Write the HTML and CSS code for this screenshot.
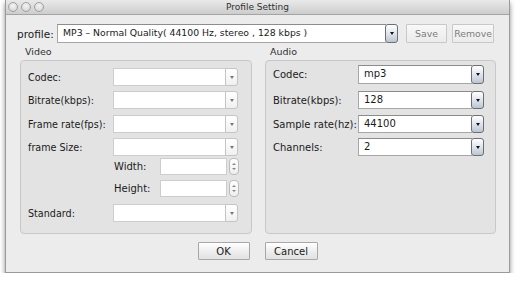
FILE: index.html
```html
<!DOCTYPE html>
<html lang="en">
<head>
    <meta charset="UTF-8">
    <title>Profile Setting</title>
    <link rel="stylesheet" href="styles.css">
</head>
<body>
    <div class="window">
        <div class="titlebar">
            <div class="lights"><span></span><span></span><span></span></div>
            <div class="title">Profile Setting</div>
            <div></div>
        </div>
        <div class="content">
            <div class="profile-row">
                <span class="profile-label">profile:</span>
                <div class="combo combo-on profile-combo">
                    <span class="field">MP3 – Normal Quality( 44100 Hz, stereo , 128 kbps )</span>
                    <span class="arrow"></span>
                </div>
                <button class="btn btn-off save">Save</button>
                <button class="btn btn-off remove">Remove</button>
            </div>

            <div class="groups">
                <div class="group video">
                    <div class="group-title">Video</div>
                    <div class="group-box">
                        <div class="row v1"><span class="lbl">Codec:</span><div class="combo combo-off"><span class="field"></span><span class="arrow"></span></div></div>
                        <div class="row v2"><span class="lbl">Bitrate(kbps):</span><div class="combo combo-off"><span class="field"></span><span class="arrow"></span></div></div>
                        <div class="row v3"><span class="lbl">Frame rate(fps):</span><div class="combo combo-off"><span class="field"></span><span class="arrow"></span></div></div>
                        <div class="row v4"><span class="lbl">frame Size:</span><div class="combo combo-off"><span class="field"></span><span class="arrow"></span></div></div>
                        <div class="row spin-row v5">
                            <span class="lbl"></span>
                            <span class="sub-lbl">Width:</span>
                            <div class="spinner"><span class="field"></span><span class="stepper"><i class="up"></i><i class="down"></i></span></div>
                        </div>
                        <div class="row spin-row v6">
                            <span class="lbl"></span>
                            <span class="sub-lbl">Height:</span>
                            <div class="spinner"><span class="field"></span><span class="stepper"><i class="up"></i><i class="down"></i></span></div>
                        </div>
                        <div class="row v7"><span class="lbl">Standard:</span><div class="combo combo-off"><span class="field"></span><span class="arrow"></span></div></div>
                    </div>
                </div>

                <div class="group audio">
                    <div class="group-title">Audio</div>
                    <div class="group-box">
                        <div class="row a1"><span class="lbl">Codec:</span><div class="combo combo-on"><span class="field">mp3</span><span class="arrow"></span></div></div>
                        <div class="row a2"><span class="lbl">Bitrate(kbps):</span><div class="combo combo-on"><span class="field">128</span><span class="arrow"></span></div></div>
                        <div class="row a3"><span class="lbl">Sample rate(hz):</span><div class="combo combo-on"><span class="field">44100</span><span class="arrow"></span></div></div>
                        <div class="row a4"><span class="lbl">Channels:</span><div class="combo combo-on"><span class="field">2</span><span class="arrow"></span></div></div>
                    </div>
                </div>
            </div>

            <div class="actions">
                <button class="btn ok">OK</button>
                <button class="btn cancel">Cancel</button>
            </div>
        </div>
    </div>
</body>
</html>
```

FILE: styles.css
```css
body {
    margin: 0;
    background: #ffffff;
    font-family: "DejaVu Sans", sans-serif;
    font-size: 10px;
    color: #1a1a1a;
}
.window {
    width: 505px;
    height: 273px;
    margin-left: 5px;
    box-sizing: border-box;
    border: 1px solid #9a9a9a;
    border-top: none;
    background: #ececec;
    box-shadow: 0 3px 5px rgba(0, 0, 0, 0.45);
}
.titlebar {
    height: 14px;
    border-bottom: 1px solid #a4a4a4;
    background: linear-gradient(#e9e9e9, #cdcdcd);
    display: grid;
    grid-template-columns: 1fr auto 1fr;
    align-items: center;
}
.lights {
    display: flex;
    gap: 3px;
    padding-left: 2px;
}
.lights span {
    width: 10px;
    height: 10px;
    box-sizing: border-box;
    border-radius: 50%;
    border: 1px solid #a0a0a0;
    background: radial-gradient(circle at 50% 35%, #f4f4f4, #cfcfcf);
}
.title {
    font-size: 9px;
    color: #303030;
}
.content {
    padding-top: 9px;
}
.profile-row {
    display: flex;
    align-items: center;
    height: 19px;
    padding-left: 11px;
}
.profile-label {
    width: 40px;
    flex-shrink: 0;
    font-size: 10.5px;
}
.profile-row .profile-combo {
    width: 341px;
    height: 19px;
    flex-shrink: 0;
}
.profile-combo .field {
    line-height: 17px;
    font-size: 9.3px;
}
.btn {
    font-family: "DejaVu Sans", sans-serif;
    font-size: 10px;
    height: 19px;
    padding: 0;
    box-sizing: border-box;
    border: 1px solid #a8a8a8;
    border-radius: 1px;
    background: linear-gradient(#ffffff, #ededed 55%, #e2e2e2);
    color: #1a1a1a;
    flex-shrink: 0;
}
.btn-off {
    border-color: #c8c8c8;
    background: linear-gradient(#f8f8f8, #ebebeb);
    color: #7c7c7c;
    font-size: 9.3px;
}
.save {
    width: 41px;
    margin-left: 8px;
}
.remove {
    width: 42px;
    margin-left: 5px;
}
.groups {
    display: flex;
    gap: 13px;
    padding-left: 14px;
    margin-top: 3px;
}
.group-title {
    height: 12px;
    line-height: 12px;
    margin: 0 0 2px 5px;
    color: #303030;
    font-size: 9.5px;
}
.group-box {
    height: 174px;
    box-sizing: border-box;
    border: 1px solid #c8c8c8;
    border-radius: 4px;
    background: #e3e3e3;
    padding-left: 7px;
}
.video .group-box {
    width: 232px;
}
.audio .group-box {
    width: 231px;
}
.row {
    display: flex;
    align-items: center;
    height: 18px;
    margin-top: 5px;
}
.lbl {
    width: 85px;
    flex-shrink: 0;
    white-space: nowrap;
}
.combo {
    display: flex;
    height: 18px;
    width: 125px;
    box-sizing: border-box;
}
.audio .combo {
    width: 126px;
}
.combo .field {
    flex: 1;
    background: #ffffff;
    line-height: 16px;
    padding-left: 5px;
    white-space: nowrap;
    overflow: hidden;
}
.combo .arrow {
    display: flex;
    align-items: center;
    justify-content: center;
    width: 13px;
    box-sizing: border-box;
    border-radius: 0 3px 3px 0;
}
.combo .arrow::after {
    content: "";
    border-left: 2.5px solid transparent;
    border-right: 2.5px solid transparent;
    border-top: 3px solid #444;
}
.combo-off .field {
    border: 1px solid #cdcdcd;
    border-right: none;
}
.combo-off .arrow {
    border: 1px solid #c4c4c4;
    background: linear-gradient(#ffffff, #f0f0f0);
}
.combo-off .arrow::after {
    border-top-color: #777;
}
.combo-on .field {
    border: 1px solid #a6a6a6;
    border-top-color: #8c8c8c;
    border-right: none;
}
.combo-on .arrow {
    border: 1px solid #6e6e6e;
    border-radius: 3px;
    background: linear-gradient(#ffffff, #dfe5ee 50%, #bcc5d3);
    margin-left: -1px;
}
.combo-on .arrow::after {
    border-top-color: #111;
}
.v1 { margin-top: 7px; }
.v3 { margin-top: 6px; }
.v4 { margin-top: 5px; }
.v5 { margin-top: 2px; }
.v6 { margin-top: 5px; }
.v7 { margin-top: 7px; }
.a1 { margin-top: 4px; height: 19px; }
.a1 .combo { height: 19px; }
.a2 { margin-top: 7px; }
.a3 { margin-top: 6px; }
.video .lbl {
    font-size: 9.6px;
}
.spin-row {
    height: 17px;
}
.spin-row .lbl {
    width: 86px;
}
.sub-lbl {
    width: 46px;
}
.spinner {
    display: flex;
    width: 79px;
    height: 17px;
}
.spinner .field {
    flex: 1;
    background: #ffffff;
    border: 1px solid #cdcdcd;
}
.stepper {
    width: 10px;
    margin-left: 2px;
    box-sizing: border-box;
    border: 1px solid #bcbcbc;
    border-radius: 4px;
    background: linear-gradient(#ffffff, #eeeeee);
    display: flex;
    flex-direction: column;
    align-items: center;
    justify-content: space-evenly;
}
.stepper i {
    display: block;
    border-left: 2px solid transparent;
    border-right: 2px solid transparent;
}
.stepper .up {
    border-bottom: 2.5px solid #888;
}
.stepper .down {
    border-top: 2.5px solid #888;
}
.actions {
    display: flex;
    justify-content: center;
    gap: 15px;
    margin-top: 8px;
}
.ok {
    width: 52px;
    height: 18px;
}
.cancel {
    width: 53px;
    height: 18px;
}
```
